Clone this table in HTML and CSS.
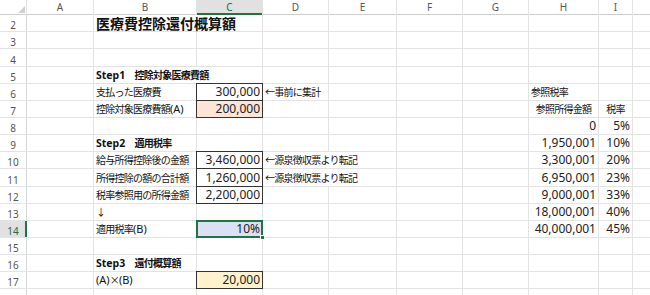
FILE: index.html
```html
<!DOCTYPE html>
<html lang="ja">
<head>
<meta charset="utf-8">
<title>医療費控除還付概算額</title>
<link rel="stylesheet" href="styles.css">
</head>
<body>
<div class="sheet">
  <div class="corner"><span class="tri"></span></div>
  <div class="ch">A</div><div class="ch">B</div><div class="ch sel">C</div><div class="ch">D</div><div class="ch">E</div><div class="ch">F</div><div class="ch">G</div><div class="ch">H</div><div class="ch">I</div><div class="ch"></div>

  <div class="rh">2</div><div class="c"></div><div class="c s2 title">医療費控除還付概算額</div><div class="c"></div><div class="c"></div><div class="c"></div><div class="c"></div><div class="c"></div><div class="c"></div><div class="c"></div>

  <div class="rh">3</div><div class="c"></div><div class="c"></div><div class="c"></div><div class="c"></div><div class="c"></div><div class="c"></div><div class="c"></div><div class="c"></div><div class="c"></div><div class="c"></div>

  <div class="rh">4</div><div class="c"></div><div class="c"></div><div class="c"></div><div class="c"></div><div class="c"></div><div class="c"></div><div class="c"></div><div class="c"></div><div class="c"></div><div class="c"></div>

  <div class="rh">5</div><div class="c"></div><div class="c s2 b"><span class="lt">Step1</span>　控除対象医療費額</div><div class="c"></div><div class="c"></div><div class="c"></div><div class="c"></div><div class="c"></div><div class="c"></div><div class="c"></div>

  <div class="rh">6</div><div class="c"></div><div class="c">支払った医療費</div><div class="c n r box">300,000</div><div class="c">←事前に集計</div><div class="c"></div><div class="c"></div><div class="c"></div><div class="c">参照税率</div><div class="c"></div><div class="c"></div>

  <div class="rh">7</div><div class="c"></div><div class="c">控除対象医療費額<span class="lt">(A)</span></div><div class="c n r box peach">200,000</div><div class="c"></div><div class="c"></div><div class="c"></div><div class="c"></div><div class="c m">参照所得金額</div><div class="c m">税率</div><div class="c"></div>

  <div class="rh">8</div><div class="c"></div><div class="c"></div><div class="c"></div><div class="c"></div><div class="c"></div><div class="c"></div><div class="c"></div><div class="c n r">0</div><div class="c n r">5%</div><div class="c"></div>

  <div class="rh">9</div><div class="c"></div><div class="c b"><span class="lt">Step2</span>　適用税率</div><div class="c"></div><div class="c"></div><div class="c"></div><div class="c"></div><div class="c"></div><div class="c n r">1,950,001</div><div class="c n r">10%</div><div class="c"></div>

  <div class="rh">10</div><div class="c"></div><div class="c">給与所得控除後の金額</div><div class="c n r box">3,460,000</div><div class="c s2">←源泉徴収票より転記</div><div class="c"></div><div class="c"></div><div class="c n r">3,300,001</div><div class="c n r">20%</div><div class="c"></div>

  <div class="rh">11</div><div class="c"></div><div class="c">所得控除の額の合計額</div><div class="c n r box">1,260,000</div><div class="c s2">←源泉徴収票より転記</div><div class="c"></div><div class="c"></div><div class="c n r">6,950,001</div><div class="c n r">23%</div><div class="c"></div>

  <div class="rh">12</div><div class="c"></div><div class="c">税率参照用の所得金額</div><div class="c n r box">2,200,000</div><div class="c"></div><div class="c"></div><div class="c"></div><div class="c"></div><div class="c n r">9,000,001</div><div class="c n r">33%</div><div class="c"></div>

  <div class="rh">13</div><div class="c"></div><div class="c">↓</div><div class="c"></div><div class="c"></div><div class="c"></div><div class="c"></div><div class="c"></div><div class="c n r">18,000,001</div><div class="c n r">40%</div><div class="c"></div>

  <div class="rh sel">14</div><div class="c"></div><div class="c">適用税率<span class="lt">(B)</span></div><div class="c n r cur">10%</div><div class="c"></div><div class="c"></div><div class="c"></div><div class="c"></div><div class="c n r">40,000,001</div><div class="c n r">45%</div><div class="c"></div>

  <div class="rh">15</div><div class="c"></div><div class="c"></div><div class="c"></div><div class="c"></div><div class="c"></div><div class="c"></div><div class="c"></div><div class="c"></div><div class="c"></div><div class="c"></div>

  <div class="rh">16</div><div class="c"></div><div class="c b"><span class="lt">Step3</span>　還付概算額</div><div class="c"></div><div class="c"></div><div class="c"></div><div class="c"></div><div class="c"></div><div class="c"></div><div class="c"></div><div class="c"></div>

  <div class="rh">17</div><div class="c"></div><div class="c"><span class="lt">(A)</span>×<span class="lt">(B)</span></div><div class="c n r box yel">20,000</div><div class="c"></div><div class="c"></div><div class="c"></div><div class="c"></div><div class="c"></div><div class="c"></div><div class="c"></div>

  <div class="rh"></div><div class="c"></div><div class="c"></div><div class="c"></div><div class="c"></div><div class="c"></div><div class="c"></div><div class="c"></div><div class="c"></div><div class="c"></div><div class="c"></div>
</div>
</body>
</html>
```

FILE: styles.css
```css
html, body {
  margin: 0;
  padding: 0;
  background: #fff;
}
body {
  width: 650px;
  height: 295px;
  overflow: hidden;
  font-family: "Noto Sans CJK JP", sans-serif;
  color: #111;
}
.sheet {
  display: grid;
  grid-template-columns: 26px 66px 102px 65px 65px 67px 65px 65px 69px 33px 17px;
  grid-template-rows: 14px 16px 16px 17px 16px 16px 16px 16px 16px 16px 17px 16px 16px 16px 16px 16px 16px 6px;
  gap: 1px;
  background: #e3e3e3;
  width: 650px;
}
.corner {
  background: #fff;
  display: flex;
  justify-content: flex-end;
  align-items: flex-end;
  padding: 0 1px 1px 0;
  box-shadow: 0 1px 0 #cdcdcd;
}
.tri {
  width: 0;
  height: 0;
  border-left: 7px solid transparent;
  border-bottom: 7px solid #d0d0d0;
}
.ch {
  background: #fff;
  color: #555;
  font-family: "Noto Sans", sans-serif;
  font-size: 10px;
  line-height: 14px;
  display: flex;
  justify-content: center;
  align-items: center;
  box-shadow: 0 1px 0 #cdcdcd;
}
.ch.sel {
  background: #e1e1e1;
  color: #1d6b3f;
  box-shadow: inset 0 -1px 0 #217346, 0 1px 0 #217346;
}
.rh {
  background: #fff;
  color: #555;
  font-family: "Noto Sans", sans-serif;
  font-size: 10px;
  line-height: 12px;
  display: flex;
  justify-content: center;
  align-items: flex-end;
  box-shadow: 1px 0 0 #d6d6d6;
}
.rh.sel {
  background: #e1e1e1;
  color: #1d6b3f;
  box-shadow: inset -1px 0 0 #217346, 1px 0 0 #217346;
}
.c {
  background: #fff;
  display: flex;
  align-items: flex-end;
  padding: 0 2px;
  font-size: 10px;
  line-height: 16px;
  letter-spacing: -0.75px;
  white-space: nowrap;
  min-width: 0;
}
.s2 {
  grid-column: span 2;
}
.r {
  justify-content: flex-end;
}
.m {
  justify-content: center;
}
.b {
  font-weight: 700;
}
.title {
  font-size: 14px;
  font-weight: 700;
  letter-spacing: 0;
}
.n {
  font-family: "Noto Sans", sans-serif;
  font-size: 12px;
  letter-spacing: 0;
  color: #222;
}
.lt {
  font-family: "Noto Sans", sans-serif;
  font-size: 11px;
  letter-spacing: 0;
}
.b .lt {
  font-size: 10.5px;
}
.box {
  outline: 1px solid #333;
}
.peach {
  background: #fce4d6;
}
.yel {
  background: #fff2cc;
}
.cur {
  position: relative;
  z-index: 1;
  background: #d9e1f2;
  outline: 2px solid #217346;
  outline-offset: -1px;
}
.cur::after {
  content: "";
  position: absolute;
  right: -3px;
  bottom: -3px;
  width: 3px;
  height: 3px;
  background: #217346;
  border: 1px solid #fff;
}
```
